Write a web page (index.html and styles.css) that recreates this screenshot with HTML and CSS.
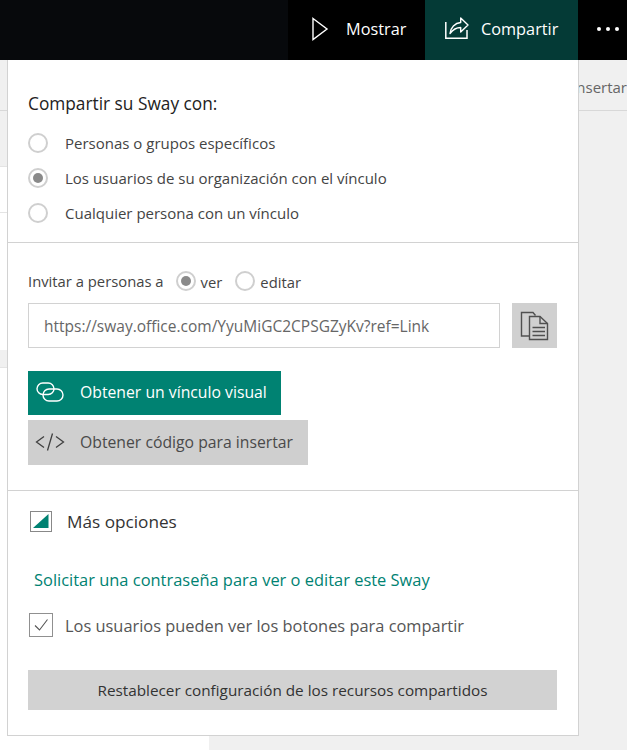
FILE: index.html
```html
<!DOCTYPE html>
<html lang="es">
<head>
<meta charset="utf-8">
<title>Compartir</title>
<link rel="stylesheet" href="styles.css">
</head>
<body>
<header class="topbar">
  <div class="top-fill"></div>
  <div class="top-btn show">
    <svg class="ico-play" width="18" height="24" viewBox="0 0 18 24"><path d="M2 1.5 L16 12 L2 22.5 Z" fill="none" stroke="#fff" stroke-width="1.4"/></svg>
    <span>Mostrar</span>
  </div>
  <div class="top-btn share">
    <svg class="ico-share" width="24" height="24" viewBox="0 0 24 24"><path d="M.8 5V21.3H22V13" fill="none" stroke="#fff" stroke-width="1.5"/><path d="M5 16.5C5.5 10.5 10 6 15.7 5.5V1L23 8L15.7 15V10.5C11 10.5 8 12.5 5 16.5Z" fill="none" stroke="#fff" stroke-width="1.4" stroke-linejoin="round"/></svg>
    <span>Compartir</span>
  </div>
  <div class="top-more"><i></i><i></i><i></i></div>
</header>
<main class="canvas">
  <div class="left-col">
    <div class="strip s1"></div>
    <div class="strip s2"></div>
    <div class="strip s3"></div>
    <div class="strip s4"></div>
    <div class="strip s5"></div>
    <div class="strip s6"></div>
  </div>
  <div class="right-col">
    <div class="right-tab">Insertar</div>
  </div>
</main>
<section class="panel">
  <div class="sec sec-who">
    <h2 class="title">Compartir su Sway con:</h2>
    <div class="radio-row"><span class="radio"></span><span>Personas o grupos específicos</span></div>
    <div class="radio-row"><span class="radio on"></span><span>Los usuarios de su organización con el vínculo</span></div>
    <div class="radio-row"><span class="radio"></span><span>Cualquier persona con un vínculo</span></div>
  </div>
  <div class="sec sec-link">
    <div class="invite">
      <span class="invite-label">Invitar a personas a</span>
      <span class="radio on"></span><span class="opt-ver">ver</span>
      <span class="radio"></span><span class="opt-edit">editar</span>
    </div>
    <div class="link-row">
      <div class="link-input">https://sway.office.com/YyuMiGC2CPSGZyKv?ref=Link</div>
      <div class="copy-btn">
        <svg width="30" height="30" viewBox="0 0 30 30" fill="none" stroke="#505050" stroke-width="1.4"><path d="M9.5 25H1.5V1.5H13L15.5 4.5"/><path d="M9.5 5.5H20L27.5 12.5V28.5H9.5Z" fill="#d0d0d0"/><path d="M20 5.5V12.5H27.5"/><path d="M12.5 16.5H25M12.5 20.5H25M12.5 24.5H25"/></svg>
      </div>
    </div>
    <div class="action visual">
      <svg width="30" height="24" viewBox="0 0 30 24" fill="none" stroke="#fff" stroke-width="1.4"><rect x="2" y="3" width="17" height="11.5" rx="5.75"/><rect x="8" y="9" width="20" height="12" rx="6"/></svg>
      <span>Obtener un vínculo visual</span>
    </div>
    <div class="action embed">
      <svg width="30" height="24" viewBox="0 0 30 24" fill="none" stroke="#404040" stroke-width="1.3"><path d="M9 6.5L1.5 12L9 17.5M21 6.5L28.5 12L21 17.5M17.5 3.5L12.5 20.5"/></svg>
      <span>Obtener código para insertar</span>
    </div>
  </div>
  <div class="sec sec-more">
    <div class="more-head">
      <span class="more-box"><svg width="16" height="14" viewBox="0 0 16 14"><path d="M15.5 0V14H0Z" fill="#008272"/></svg></span>
      <span>Más opciones</span>
    </div>
    <a class="pass-link">Solicitar una contraseña para ver o editar este Sway</a>
    <div class="check-row">
      <span class="check"><svg width="22" height="22" viewBox="0 0 22 22"><path d="M5 11.5L9.5 16L17.5 5.5" fill="none" stroke="#555" stroke-width="1.1"/></svg></span>
      <span>Los usuarios pueden ver los botones para compartir</span>
    </div>
    <div class="reset">Restablecer configuración de los recursos compartidos</div>
  </div>
</section>
</body>
</html>
```
FILE: styles.css
```css
* { box-sizing: border-box; }
html, body { margin: 0; height: 750px; overflow: hidden; }
body {
  position: relative;
  background: #f0f0f0;
  font-family: "Open Sans", "Noto Sans", sans-serif;
  color: #333;
  width: 627px;
}
.topbar { display: flex; height: 60px; background: #000; }
.top-fill { width: 288px; background: #07090c; }
.top-btn { display: flex; align-items: center; color: #fff; font-size: 16.3px; padding-bottom: 2px; }
.show { width: 137px; padding-left: 23px; gap: 17px; }
.share { width: 153px; padding-left: 20px; gap: 12px; background: #043a36; }
.top-more { flex: 1; display: flex; align-items: center; gap: 5px; padding-left: 19px; padding-bottom: 2px; }
.top-more i { width: 4px; height: 4px; border-radius: 50%; background: #fff; }

.canvas { display: flex; height: 690px; }
.left-col { width: 209px; background: #fff; display: flex; flex-direction: column; }
.strip { width: 100%; }
.s1 { height: 51px; background: #f0f0f0; border-bottom: 1px solid #d8d8d8; }
.s2 { height: 56px; background: #f0f0f0; border-bottom: 1px solid #e4e4e4; }
.s3 { height: 46px; border-bottom: 1px solid #e4e4e4; }
.s4 { height: 137px; }
.s5 { height: 18px; background: #f0f0f0; border-bottom: 1px solid #e4e4e4; }
.s6 { flex: 1; }
.right-col { flex: 1; position: relative; }
.right-tab {
  margin-left: 325px;
  height: 51px;
  padding-top: 17px;
  padding-left: 26px;
  overflow: hidden;
  white-space: nowrap;
  border-bottom: 1px solid #d8d8d8;
  font-size: 15px;
  color: #666;
  direction: rtl;
  text-align: right;
}

.panel {
  position: absolute;
  left: 7px;
  top: 60px;
  width: 572px;
  height: 676px;
  background: #fff;
  border: 1px solid #d2d2d2;
  border-top: 0;
  display: flex;
  flex-direction: column;
}
.sec { padding-left: 20px; padding-right: 21px; border-bottom: 1px solid #d2d2d2; }
.sec-who { height: 183px; padding-top: 32px; }
.title { margin: 0 0 9px; font-size: 17.3px; line-height: 24px; font-weight: 400; color: #222; }
.radio-row { display: flex; align-items: center; height: 35px; gap: 17px; font-size: 15px; color: #444; }
.radio { width: 20px; height: 20px; border-radius: 50%; border: 2px solid #cfcfcf; background: #fff; flex: none; position: relative; display: flex; align-items: center; justify-content: center; }
.radio.on::after { content: ""; width: 10px; height: 10px; border-radius: 50%; background: #8a8a8a; }

.sec-link { height: 248px; padding-top: 24px; }
.invite { display: flex; align-items: center; height: 28px; font-size: 14.8px; color: #444; }
.invite-label { margin-right: 12px; }
.opt-ver { margin: 2px 13px 0 5px; }
.opt-edit { margin: 2px 0 0 5px; }
.link-row { display: flex; margin-top: 8px; gap: 12px; }
.link-input { width: 472px; height: 45px; border: 1px solid #d2d2d2; padding-left: 15px; line-height: 45px; font-size: 15.5px; color: #666; white-space: nowrap; }
.copy-btn { width: 45px; height: 45px; background: #d0d0d0; display: flex; align-items: center; justify-content: center; }
.action { display: flex; align-items: center; gap: 15px; padding-left: 7px; font-size: 15.75px; padding-bottom: 2px; }
.visual { width: 253px; height: 44px; margin-top: 23px; background: #008272; color: #fff; }
.embed { width: 280px; height: 45px; margin-top: 5px; background: #cfcfcf; color: #4a4a4a; }

.sec-more { flex: 1; border-bottom: 0; padding-top: 18px; }
.more-head { display: flex; align-items: center; height: 24px; gap: 15px; font-size: 17.2px; color: #333; }
.more-box { width: 22px; height: 21px; margin-left: 2px; border: 1px solid #888; display: flex; align-items: center; justify-content: center; }
.pass-link { display: block; margin: 36px 0 0 6px; font-size: 16.45px; line-height: 22px; color: #008272; }
.check-row { display: flex; align-items: center; height: 24px; margin-top: 22px; gap: 12px; font-size: 16.4px; color: #555; }
.check { width: 24px; height: 24px; margin-left: 1px; border: 1px solid #909090; display: flex; align-items: center; justify-content: center; flex: none; }
.reset { height: 40px; margin-top: 33px; background: #d2d2d2; display: flex; align-items: center; justify-content: center; font-size: 15.3px; color: #333; }
```
